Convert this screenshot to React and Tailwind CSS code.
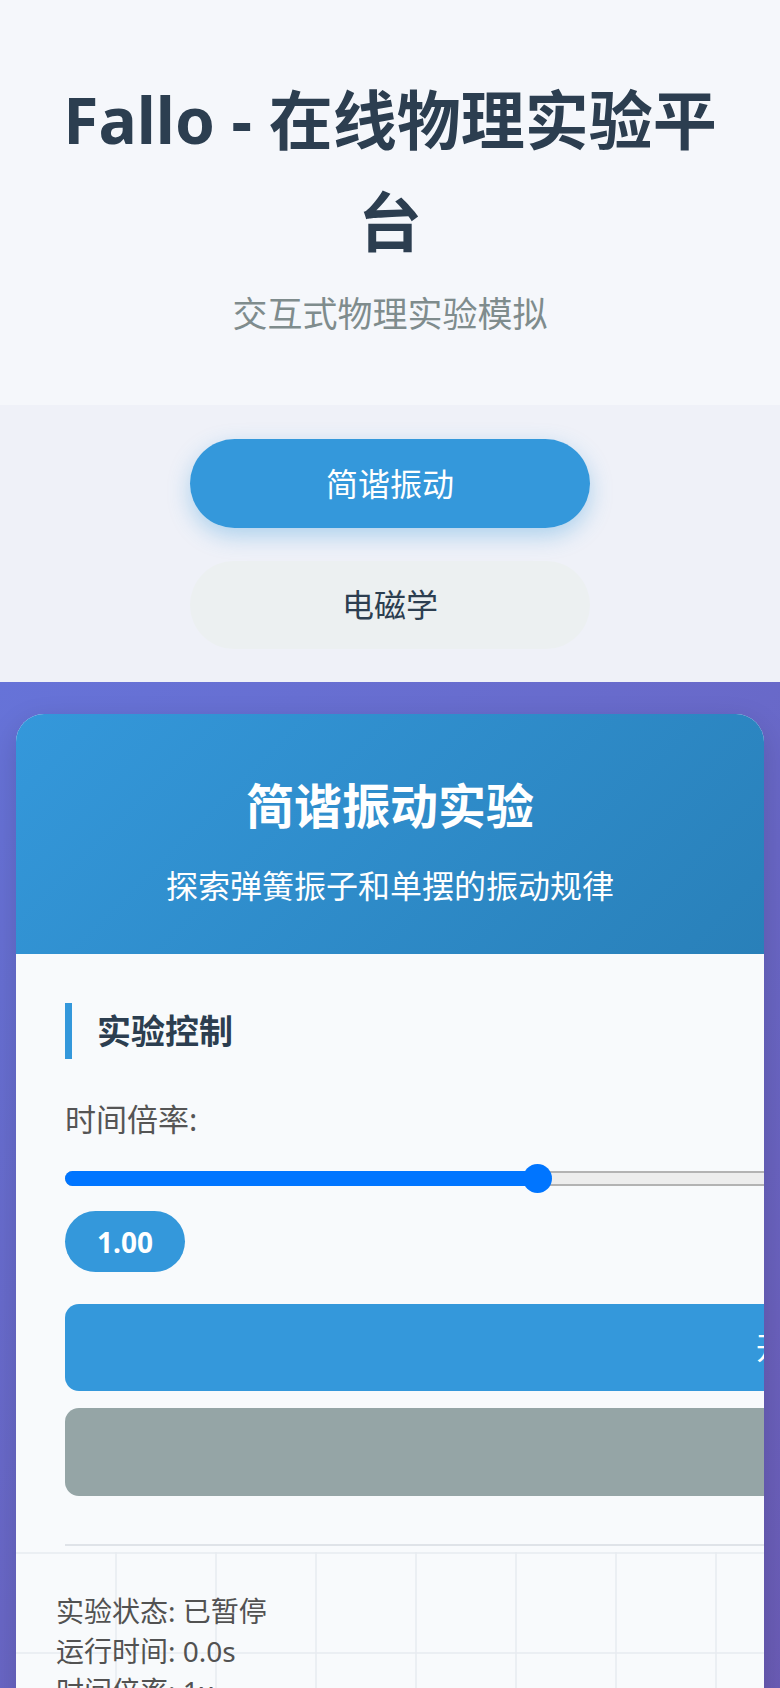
import React from 'react';

const gridX = [100, 200, 300, 400, 500, 600, 700];
const gridY = [0, 100, 200];

function RateSlider({ value, min, max }) {
  const frac = (value - min) / (max - min);
  const thumbLeft = 14.5 + frac * (1506 - 29);
  return (
    <div className="relative w-full h-[30px]">
      <div className="absolute left-0 right-0 top-[7px] h-[15px] rounded-full bg-[#ededed] border-2 border-[#b3b3b3]" />
      <div
        className="absolute left-0 top-[7px] h-[15px] rounded-full bg-[#0075ff]"
        style={{ width: `${thumbLeft}px` }}
      />
      <div
        className="absolute top-0 w-[29px] h-[29px] rounded-full bg-[#0075ff]"
        style={{ left: `${thumbLeft - 14.5}px` }}
      />
    </div>
  );
}

export default function App() {
  return (
    <div className="min-h-screen font-['Noto_Sans','Noto_Sans_CJK_SC',sans-serif] bg-[#f5f7fb]">
      {/* Header */}
      <header className="bg-[#f5f7fb] text-center pt-[69px] pb-[63px]">
        <h1 className="text-[64px] leading-[102px] font-bold text-[#2c3e50] px-[60px]">
          Fallo - 在线物理实验平台
        </h1>
        <p className="mt-[13px] text-[35px] leading-[56px] text-[#7f8c8d]">交互式物理实验模拟</p>
      </header>

      {/* Experiment nav */}
      <nav className="bg-[#eff1f8] flex flex-col items-center gap-[33px] pt-[34px] pb-[33px]">
        <button className="w-[400px] h-[89px] rounded-full bg-[#3498db] text-white text-[32px] shadow-[0_8px_22px_rgba(52,152,219,0.35)]">
          简谐振动
        </button>
        <button className="w-[400px] h-[88px] rounded-full bg-[#ecf0f1] text-[#2c3e50] text-[32px]">
          电磁学
        </button>
      </nav>

      {/* Main */}
      <main className="bg-linear-135 from-[#6673d8] to-[#6b58b0] px-4 pt-8 pb-10">
        <div className="rounded-[28px] overflow-hidden bg-[#f8fafc] shadow-[0_10px_30px_rgba(0,0,0,0.15)]">
          <div className="bg-linear-135 from-[#3498db] to-[#2980b9] text-center text-white pt-[53px] pb-[41px]">
            <h2 className="text-[48px] leading-[77px] font-bold">简谐振动实验</h2>
            <p className="mt-[14px] text-[32px] leading-[55px]">探索弹簧振子和单摆的振动规律</p>
          </div>

          {/* Controls */}
          <div className="pl-[49px] pt-[49px] pb-[6px]">
            <div className="w-[1506px] border-b-2 border-[#dfe3e8] pb-[48px]">
              <div className="border-l-[7px] border-[#3498db] pl-[25px] h-[56px] flex items-center">
                <h3 className="text-[34px] font-bold text-[#2c3e50]">实验控制</h3>
              </div>
              <label className="block mt-[35px] text-[31px] leading-[50px] text-[#555]">时间倍率:</label>
              <div className="mt-[20px]">
                <RateSlider value={1} min={0.1} max={3} />
              </div>
              <div className="mt-[17px] inline-flex items-center h-[61px] px-[32px] rounded-full bg-[#3498db] text-white text-[28px] font-bold">
                1.00
              </div>
              <div className="mt-[32px] flex flex-col gap-[17px]">
                <button className="h-[87px] rounded-[14px] bg-[#3498db] text-white text-[31px]">开始实验</button>
                <button className="h-[88px] rounded-[14px] bg-[#95a5a6] text-white text-[31px]">重置</button>
              </div>
            </div>
          </div>

          {/* Canvas */}
          <div className="relative h-[420px] bg-[#f8fafc]">
            <svg className="w-full h-full" viewBox="0 0 748 420" preserveAspectRatio="xMinYMin slice">
              {gridX.map((x) => (
                <line key={`x${x}`} x1={x} y1="0" x2={x} y2="420" stroke="#e7ebf0" strokeWidth="1.5" />
              ))}
              {gridY.map((y) => (
                <line key={`y${y}`} x1="0" y1={y + 1} x2="748" y2={y + 1} stroke="#e7ebf0" strokeWidth="1.5" />
              ))}
            </svg>
            <div className="absolute left-[40px] top-[39px] text-[28px] leading-[40px] text-[#525252]">
              <p>实验状态: 已暂停</p>
              <p>运行时间: 0.0s</p>
              <p>时间倍率: 1x</p>
            </div>
          </div>
        </div>
      </main>
    </div>
  );
}
